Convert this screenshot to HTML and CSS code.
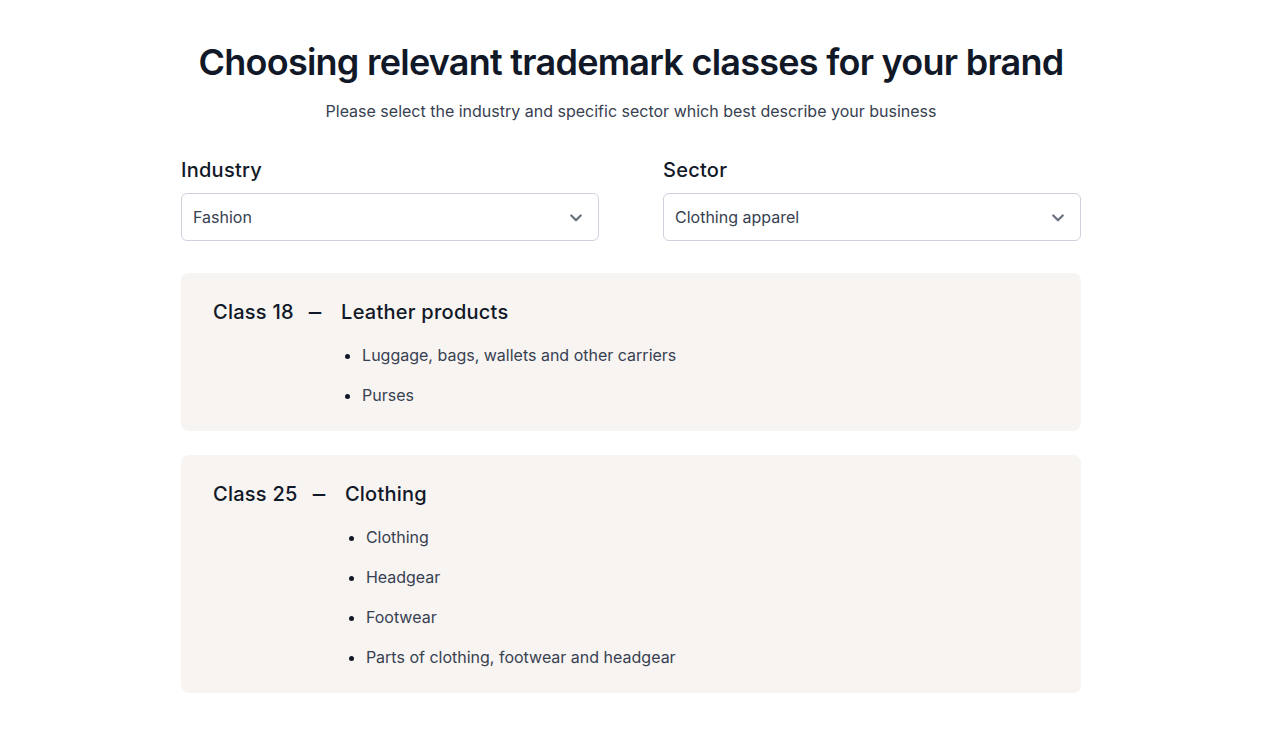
FILE: index.html
```html
<!DOCTYPE html>
<html lang="en">
<head>
<meta charset="utf-8">
<title>Trademark classes</title>
<link rel="stylesheet" href="styles.css">
</head>
<body>
<main class="page">
  <h1 class="title">Choosing relevant trademark classes for your brand</h1>
  <p class="subtitle">Please select the industry and specific sector which best describe your business</p>

  <div class="fields">
    <div class="field">
      <label class="label">Industry</label>
      <div class="select">
        <span class="select-value">Fashion</span>
        <svg class="chevron" viewBox="0 0 12 8" width="12" height="8" aria-hidden="true"><path d="M1.3 1.5 6 6.2l4.7-4.7" fill="none" stroke="currentColor" stroke-width="2.3" stroke-linecap="round" stroke-linejoin="round"/></svg>
      </div>
    </div>
    <div class="field">
      <label class="label">Sector</label>
      <div class="select">
        <span class="select-value">Clothing apparel</span>
        <svg class="chevron" viewBox="0 0 12 8" width="12" height="8" aria-hidden="true"><path d="M1.3 1.5 6 6.2l4.7-4.7" fill="none" stroke="currentColor" stroke-width="2.3" stroke-linecap="round" stroke-linejoin="round"/></svg>
      </div>
    </div>
  </div>

  <section class="card">
    <div class="card-class">Class 18<span class="dash">–</span></div>
    <div class="card-body">
      <h2 class="card-title">Leather products</h2>
      <ul class="items">
        <li>Luggage, bags, wallets and other carriers</li>
        <li>Purses</li>
      </ul>
    </div>
  </section>

  <section class="card">
    <div class="card-class">Class 25<span class="dash">–</span></div>
    <div class="card-body">
      <h2 class="card-title">Clothing</h2>
      <ul class="items">
        <li>Clothing</li>
        <li>Headgear</li>
        <li>Footwear</li>
        <li>Parts of clothing, footwear and headgear</li>
      </ul>
    </div>
  </section>
</main>
</body>
</html>
```
FILE: styles.css
```css
* { box-sizing: border-box; }

html, body {
  margin: 0;
  background: #ffffff;
}

body {
  font-family: Inter, "Noto Sans", "Liberation Sans", sans-serif;
  color: #111827;
  padding-right: 16px;
}

.page {
  width: 900px;
  margin: 0 auto;
  padding: 42px 0 40px;
}

.title {
  margin: 0;
  font-size: 36px;
  line-height: 40px;
  font-weight: 600;
  text-align: center;
  color: #111827;
  letter-spacing: -0.75px;
}

.subtitle {
  margin: 17px 0 0;
  font-size: 16px;
  line-height: 24px;
  text-align: center;
  color: #374151;
}

.fields {
  display: grid;
  grid-template-columns: 1fr 1fr;
  column-gap: 64px;
  margin-top: 33px;
}

.label {
  display: block;
  font-size: 20px;
  line-height: 28px;
  font-weight: 500;
  letter-spacing: 0.25px;
  color: #111827;
  margin-bottom: 9px;
}

.select {
  display: flex;
  align-items: center;
  justify-content: space-between;
  height: 48px;
  padding: 0 16px 0 11px;
  border: 1px solid #cfd2dc;
  border-radius: 6px;
  background: #fff;
}

.select-value {
  font-size: 16px;
  line-height: 24px;
  color: #374151;
}

.chevron {
  color: #6b7280;
  flex: none;
  margin-top: 1px;
}

.card {
  display: flex;
  margin-top: 32px;
  padding: 24px 32px;
  background: #f7f4f1;
  border-radius: 8px;
}

.card + .card {
  margin-top: 24px;
}

.card-class {
  font-size: 20px;
  line-height: 30px;
  font-weight: 500;
  letter-spacing: 0.25px;
  color: #111827;
  white-space: nowrap;
}

.dash {
  display: inline-block;
  margin: 0 21px 0 16px;
  font-weight: 600;
  transform: scaleX(1.25);
}

.card-body {
  flex: 1;
}

.card-title {
  margin: 0;
  font-size: 20px;
  line-height: 30px;
  font-weight: 500;
  letter-spacing: 0.25px;
  color: #111827;
}

.items {
  margin: 16px 0 0;
  padding-left: 21px;
  list-style: disc;
}

.items li {
  font-size: 16px;
  line-height: 24px;
  color: #374151;
}

.items li + li {
  margin-top: 16px;
}

.items li::marker {
  color: #111827;
}
```
